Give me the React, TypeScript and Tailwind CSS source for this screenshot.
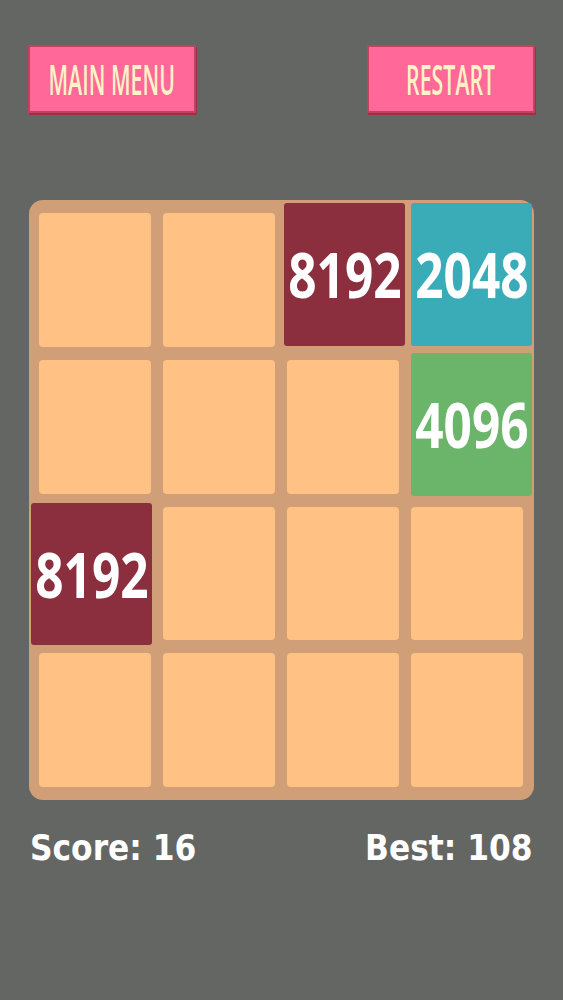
import React from 'react';

type Tile = {
  value: number | null;
  // colour + the little "pop" offsets the merged tiles have in the shot
  className?: string;
};

const tileStyles: Record<number, string> = {
  2048: 'bg-[#3aacb8]',
  4096: 'bg-[#6bb56a]',
  8192: 'bg-[#8b2f3f]',
};

const board: Tile[][] = [
  [
    { value: null },
    { value: null },
    { value: 8192, className: 'mt-[-10px] mb-[1px] ml-[-3px] mr-[-6px]' },
    { value: 2048, className: 'mt-[-10px] mb-[1px] mr-[-9px]' },
  ],
  [
    { value: null },
    { value: null },
    { value: null },
    { value: 4096, className: 'mt-[-7px] mb-[-2px] mr-[-9px]' },
  ],
  [
    { value: 8192, className: 'mt-[-4px] mb-[-5px] ml-[-8px] mr-[-1px]' },
    { value: null },
    { value: null },
    { value: null },
  ],
  [{ value: null }, { value: null }, { value: null }, { value: null }],
];

function MenuButton({ label }: { label: string }) {
  return (
    <button className="flex h-[68px] w-[168px] items-center justify-center border-2 border-[#c0435e] bg-[#ff6898] shadow-[1px_2px_0_#9c3049]">
      <span
        className="inline-block scale-x-[0.52] whitespace-nowrap text-[41px] font-semibold leading-none text-[#fff3c6]"
        style={{ fontFamily: '"Open Sans", "Liberation Sans", sans-serif' }}
      >
        {label}
      </span>
    </button>
  );
}

function Cell({ tile }: { tile: Tile }) {
  if (tile.value === null) {
    return <div className="rounded-[4px] bg-[#ffc184]" />;
  }
  return (
    <div
      className={`relative z-10 flex items-center justify-center rounded-[3px] ${tileStyles[tile.value]} ${tile.className ?? ''}`}
    >
      <span
        className="inline-block scale-x-[0.8] text-[62px] font-bold leading-none text-white"
        style={{ fontFamily: '"Open Sans", "Noto Sans", sans-serif' }}
      >
        {tile.value}
      </span>
    </div>
  );
}

export default function App() {
  return (
    <div className="min-h-[1000px] w-full bg-[#646664]">
      <div className="flex justify-between pl-[28px] pr-[28px] pt-[45px]">
        <MenuButton label="MAIN MENU" />
        <MenuButton label="RESTART" />
      </div>

      <div className="mx-[29px] mt-[87px] h-[600px] rounded-[14px] bg-[#d19f77] pb-[13px] pl-[10px] pr-[11px] pt-[13px]">
        <div className="grid h-full grid-cols-4 grid-rows-4 gap-x-[12px] gap-y-[13px]">
          {board.map((row, r) =>
            row.map((tile, c) => <Cell key={`${r}-${c}`} tile={tile} />)
          )}
        </div>
      </div>

      <div
        className="mt-[30px] flex justify-between px-[30px] text-[36px] font-bold leading-none text-white"
        style={{ fontFamily: '"DejaVu Sans", "Liberation Sans", sans-serif' }}
      >
        <span className="inline-block origin-left scale-x-[0.87]">Score: 16</span>
        <span className="inline-block origin-right scale-x-[0.87]">Best: 108</span>
      </div>
    </div>
  );
}
